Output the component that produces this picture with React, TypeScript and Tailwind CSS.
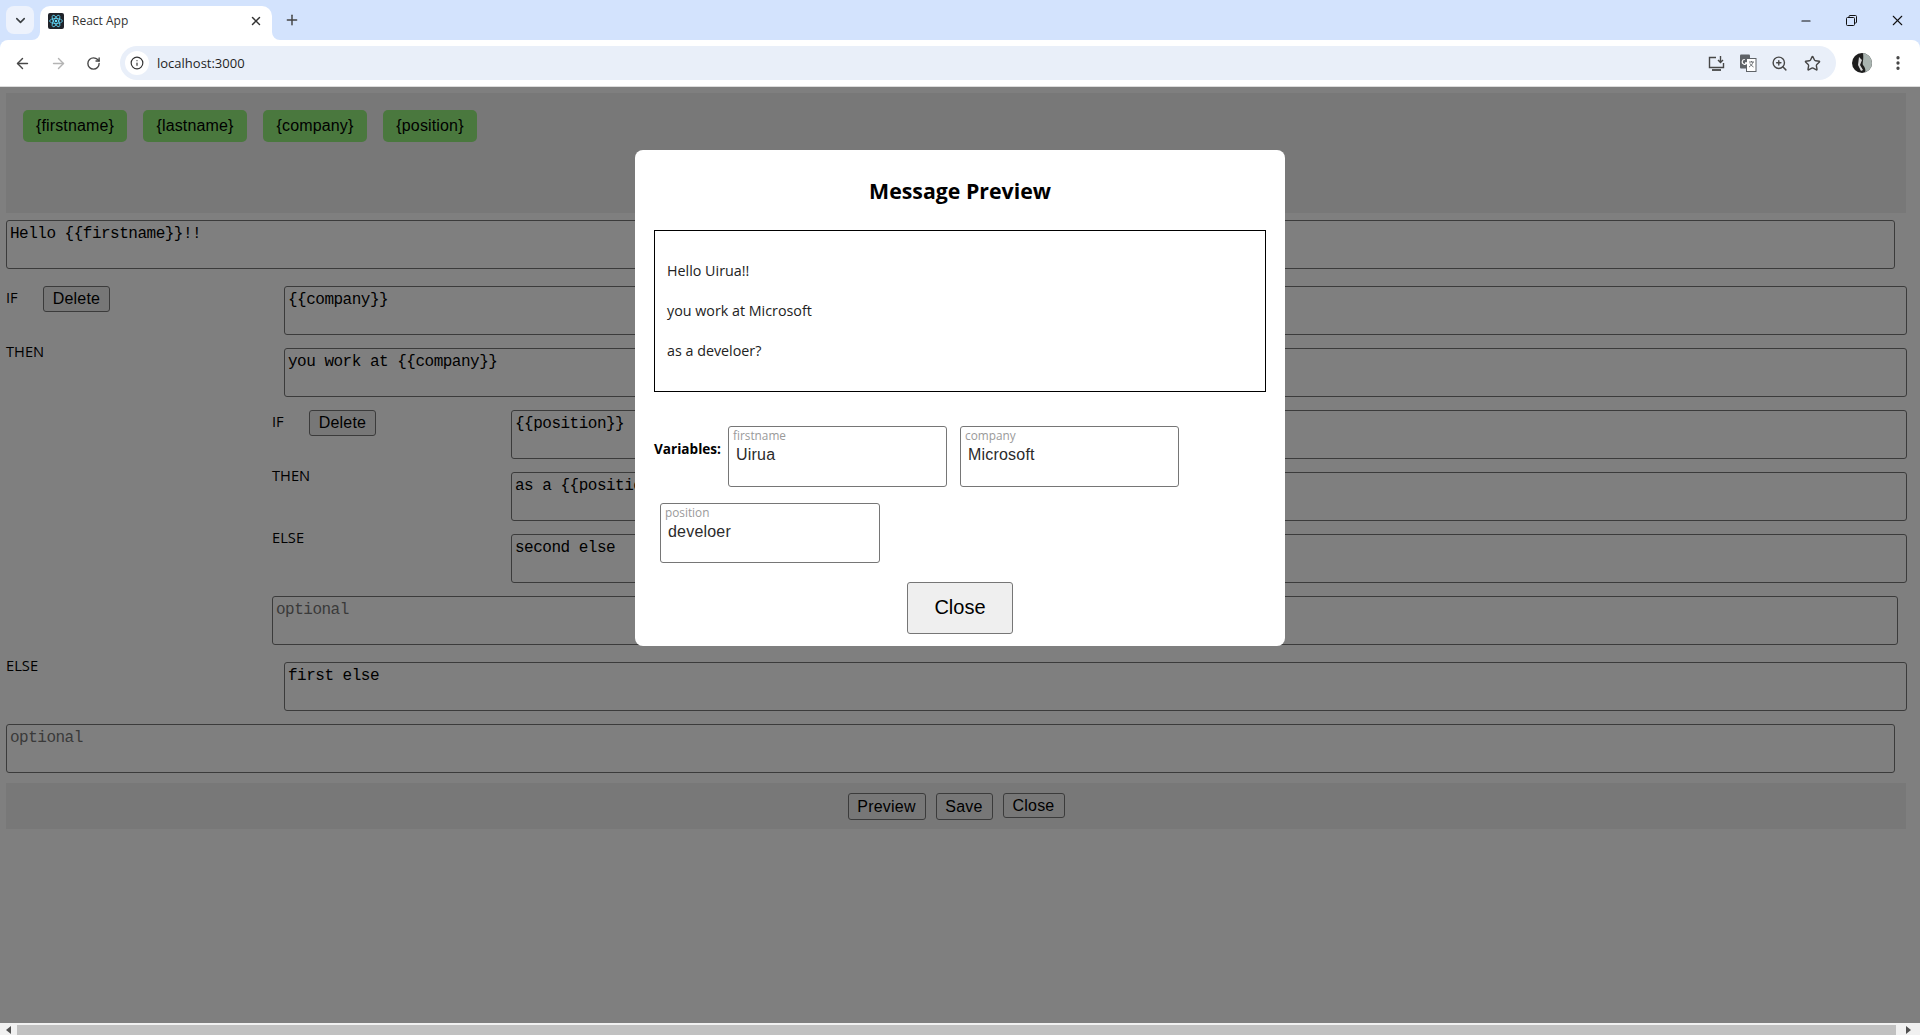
import React from "react";
import { ArrowLeft, ArrowRight, RotateCw, Info, X, Plus, ChevronDown, Minus, Star, ZoomIn, EllipsisVertical } from "lucide-react";

const mono = "font-['Liberation_Mono',monospace] text-[16px] leading-[19px] tracking-[-0.5px]";
const ta = `block resize-none rounded-[3px] border border-[#767676] bg-white pb-[2px] pl-[3px] pr-[2px] pt-[4px] text-black outline-none placeholder:text-[#757575] ${mono}`;
const label = "text-[14.7px] leading-[19px] text-black";
const btn = "rounded-[3px] border border-[#767676] bg-[#efefef] text-[16px] leading-[18px] tracking-[0.2px] text-black font-['Liberation_Sans',sans-serif]";

function Area({ value, placeholder, className }: { value?: string; placeholder?: string; className: string }) {
  return <textarea readOnly value={value ?? ""} placeholder={placeholder} className={`${ta} h-[49px] ${className}`} />;
}

function Tag({ children, w }: { children: string; w: string }) {
  return (
    <span className={`flex h-[32px] items-center justify-center rounded-[5px] bg-[#94f07c] text-[16px] tracking-[0.15px] text-black font-['Liberation_Sans',sans-serif] ${w}`}>
      {children}
    </span>
  );
}

function VarField({ name, value, w }: { name: string; value: string; w: string }) {
  return (
    <div className={`rounded-[3px] border border-[#767676] pl-[4px] ${w}`}>
      <div className="mt-[1px] text-[11.8px] leading-[14px] text-[#9a9a9a]">{name}</div>
      <div className="ml-[3px] mt-[3px] text-[16px] leading-[20px] tracking-[0.2px] text-[#2b2b2b] font-['Liberation_Sans',sans-serif]">{value}</div>
    </div>
  );
}

function ReactFavicon() {
  return (
    <svg width="16" height="16" viewBox="0 0 16 16" className="shrink-0">
      <rect width="16" height="16" rx="2" fill="#20232a" />
      <g fill="none" stroke="#61dafb" strokeWidth="0.8">
        <ellipse cx="8" cy="8" rx="6.4" ry="2.5" />
        <ellipse cx="8" cy="8" rx="6.4" ry="2.5" transform="rotate(60 8 8)" />
        <ellipse cx="8" cy="8" rx="6.4" ry="2.5" transform="rotate(120 8 8)" />
      </g>
      <circle cx="8" cy="8" r="1.3" fill="#61dafb" />
    </svg>
  );
}

function Translate() {
  return (
    <svg width="18" height="18" viewBox="0 0 18 18" className="block">
      <rect x="1" y="0.5" width="10" height="14" rx="1" fill="#5f6368" />
      <rect x="7.5" y="4.5" width="9.5" height="13" fill="#fff" stroke="#5f6368" strokeWidth="1" />
      <path d="M5.8 5.5a2.4 2.4 0 1 0 2 3.4H6" fill="none" stroke="#fff" strokeWidth="1.1" />
      <path d="M10 8h5M12.5 7v1M14 8c-.5 2-2 4-4 5M11 9.500c.8 1.500 2 2.700 3.500 3.500" fill="none" stroke="#5f6368" strokeWidth="0.9" />
    </svg>
  );
}

function Avatar() {
  return (
    <svg width="20" height="20" viewBox="0 0 20 20" className="block">
      <defs>
        <clipPath id="av"><circle cx="10" cy="10" r="10" /></clipPath>
      </defs>
      <g clipPath="url(#av)">
        <rect width="20" height="20" fill="#1d1d1d" />
        <path d="M11 0h9v20h-7c1-3 0-6-2-8-1-2 1-5 0-12z" fill="#a9b4b0" />
        <path d="M7 4l3 3-2 5 3 5-2 1-3-6z" fill="#d5d5d5" />
      </g>
    </svg>
  );
}

function InstallIcon() {
  return (
    <svg width="17" height="17" viewBox="0 0 17 17" fill="none" stroke="#474747" strokeWidth="1.4" className="block">
      <path d="M8 2.500H1.500v10h14V8" />
      <path d="M4 15h9" strokeWidth="1.800" />
      <path d="M12.500 1v6M10 5l2.500 2.500L15 5" />
    </svg>
  );
}

function BrowserChrome() {
  return (
    <header className="shrink-0 bg-[#d3e3fd] font-['Open_Sans',sans-serif]">
      <div className="flex h-[40px] items-end pl-[6px]">
        <div className="mb-[6px] flex h-[28px] w-[28px] items-center justify-center rounded-[8px] bg-[#edf2fc]">
          <ChevronDown size={15} strokeWidth={2.5} className="text-[#3c4043]" />
        </div>
        <div className="relative ml-[6px] flex h-[34px] w-[232px] items-center rounded-t-[10px] bg-white pb-[5px] pl-[8px] pr-[9px]">
          <svg width="8" height="8" viewBox="0 0 8 8" className="absolute bottom-0 left-[-8px]"><path d="M8 0v8H0a8 8 0 0 0 8-8z" fill="#fff" /></svg>
          <svg width="8" height="8" viewBox="0 0 8 8" className="absolute bottom-0 right-[-8px]"><path d="M0 0v8h8a8 8 0 0 1-8-8z" fill="#fff" /></svg>
          <ReactFavicon />
          <span className="ml-[8px] flex-1 text-[12px] leading-[16px] text-[#333]">React App</span>
          <X size={14} strokeWidth={2.5} className="text-[#333]" />
        </div>
        <Plus size={16} strokeWidth={2.2} className="mb-[12px] ml-[12px] text-[#444]" />
        <div className="flex-1" />
        <div className="mb-[11px] mr-[14px] flex items-center">
          <Minus size={14} strokeWidth={1.8} className="text-[#111]" />
          <svg width="11" height="11" viewBox="0 0 11 11" className="ml-[33px]" fill="none" stroke="#111" strokeWidth="1">
            <rect x="0.5" y="2.500" width="8" height="8" rx="1" />
            <path d="M3 2.500V1.500a1 1 0 0 1 1-1h5.500a1 1 0 0 1 1 1V7a1 1 0 0 1-1 1H8.500" />
          </svg>
          <X size={17} strokeWidth={1.5} className="ml-[32px] text-[#111]" />
        </div>
      </div>
      <div className="flex h-[46px] items-center rounded-t-[8px] bg-white pl-[14px] pr-[13px]">
        <ArrowLeft size={17} strokeWidth={2} className="text-[#474747]" />
        <ArrowRight size={17} strokeWidth={2} className="ml-[19px] text-[#b4b4b4]" />
        <RotateCw size={15} strokeWidth={2.2} className="ml-[19px] text-[#474747]" />
        <div className="ml-[19px] flex h-[34px] flex-1 items-center rounded-full bg-[#e9eff9] pl-[5px] pr-[15px]">
          <span className="flex h-[24px] w-[24px] items-center justify-center rounded-full bg-white">
            <Info size={14} strokeWidth={2} className="text-[#333]" />
          </span>
          <span className="ml-[8px] flex-1 text-[13px] leading-[18px] text-[#1f1f1f]">localhost:3000</span>
          <InstallIcon />
          <span className="ml-[14px]"><Translate /></span>
          <ZoomIn size={17} strokeWidth={2} className="ml-[14px] text-[#474747]" />
          <Star size={17} strokeWidth={2} className="ml-[16px] text-[#474747]" />
        </div>
        <span className="ml-[16px]"><Avatar /></span>
        <EllipsisVertical size={18} strokeWidth={2.4} className="ml-[17px] text-[#444]" />
      </div>
      <div className="h-px bg-[#dcdcdc]" />
    </header>
  );
}

function Modal() {
  return (
    <div className="absolute left-[635px] top-[63px] h-[496px] w-[650px] rounded-[8px] bg-white px-[19px] pt-[26px] font-['Open_Sans',sans-serif] text-black">
      <h2 className="text-center text-[21.3px] font-bold leading-[30px]">Message Preview</h2>
      <div className="mt-[24px] h-[162px] w-[612px] border border-black pl-[12px] pt-[30px] text-[14.3px] leading-[20px] text-[#222]">
        <p>Hello Uirua!!</p>
        <p className="mt-[20px]">you work at Microsoft</p>
        <p className="mt-[20px]">as a develoer?</p>
      </div>
      <div className="mt-[34px] flex items-start">
        <span className="mt-[13px] w-[74px] text-[13.6px] font-bold leading-[19px]">Variables:</span>
        <VarField name="firstname" value="Uirua" w="h-[61px] w-[219px]" />
        <span className="w-[13px]" />
        <VarField name="company" value="Microsoft" w="h-[61px] w-[219px]" />
      </div>
      <div className="mt-[16px] pl-[6px]">
        <VarField name="position" value="develoer" w="h-[60px] w-[220px]" />
      </div>
      <div className="mt-[19px] flex justify-center">
        <button className="h-[52px] w-[106px] rounded-[3px] border border-[#767676] bg-[#efefef] pb-[2px] text-[20px] text-black font-['Liberation_Sans',sans-serif]">Close</button>
      </div>
    </div>
  );
}

export default function App() {
  return (
    <div className="flex h-[1035px] w-[1920px] flex-col overflow-hidden bg-white font-['Open_Sans',sans-serif]">
      <BrowserChrome />
      <main className="relative flex-1 px-[6px] pt-[6px]">
        <section className="flex h-[120px] w-[1900px] items-start gap-[16px] bg-[#f0f0f0] pl-[17px] pt-[17px]">
          <Tag w="w-[104px]">{"{firstname}"}</Tag>
          <Tag w="w-[104px]">{"{lastname}"}</Tag>
          <Tag w="w-[104px]">{"{company}"}</Tag>
          <Tag w="w-[94px]">{"{position}"}</Tag>
        </section>

        <Area value="Hello {{firstname}}!!" className="mt-[7px] w-[1889px]" />

        <div className="mt-[17px] flex">
          <div className="flex w-[278px] items-start">
            <span className={`${label} mt-[2px] w-[37px]`}>IF</span>
            <button className={`${btn} h-[26px] w-[67px]`}>Delete</button>
          </div>
          <Area value="{{company}}" className="w-[1623px]" />
        </div>

        <div className="mt-[13px] flex">
          <span className={`${label} -mt-[6px] w-[278px]`}>THEN</span>
          <Area value="you work at {{company}}" className="w-[1623px]" />
        </div>

        <div className="ml-[266px] mt-[13px]">
          <div className="flex">
            <div className="flex w-[239px] items-start">
              <span className={`${label} mt-[2px] w-[37px]`}>IF</span>
              <button className={`${btn} h-[26px] w-[67px]`}>Delete</button>
            </div>
            <Area value="{{position}}" className="w-[1396px]" />
          </div>
          <div className="mt-[13px] flex">
            <span className={`${label} -mt-[6px] w-[239px]`}>THEN</span>
            <Area value="as a {{position}}?" className="w-[1396px]" />
          </div>
          <div className="mt-[13px] flex">
            <span className={`${label} -mt-[6px] w-[239px]`}>ELSE</span>
            <Area value="second else" className="w-[1396px]" />
          </div>
          <Area placeholder="optional" className="mt-[13px] w-[1626px]" />
        </div>

        <div className="mt-[17px] flex">
          <span className={`${label} -mt-[6px] w-[278px]`}>ELSE</span>
          <Area value="first else" className="w-[1623px]" />
        </div>

        <Area placeholder="optional" className="mt-[13px] w-[1889px]" />

        <div className="mt-[10px] flex h-[46px] w-[1900px] items-start justify-center gap-[10px] bg-[#f0f0f0] pt-[10px]">
          <button className={`${btn} h-[27px] w-[78px]`}>Preview</button>
          <button className={`${btn} h-[27px] w-[57px]`}>Save</button>
          <button className={`${btn} h-[25px] w-[62px]`}>Close</button>
        </div>

        <div className="absolute inset-0 bg-black/50" />
        <Modal />
      </main>
      <footer className="flex h-[12px] shrink-0 items-end bg-[#f1f1f1]">
        <span className="flex h-[10px] w-[17px] items-center justify-center">
          <svg width="5" height="8" viewBox="0 0 5 8"><path d="M5 0v8L0 4z" fill="#505050" /></svg>
        </span>
        <span className="h-[10px] w-[1879px] bg-[#c1c1c1]" />
        <span className="flex h-[10px] w-[24px] items-center justify-center">
          <svg width="5" height="8" viewBox="0 0 5 8"><path d="M0 0v8l5-4z" fill="#505050" /></svg>
        </span>
      </footer>
    </div>
  );
}
